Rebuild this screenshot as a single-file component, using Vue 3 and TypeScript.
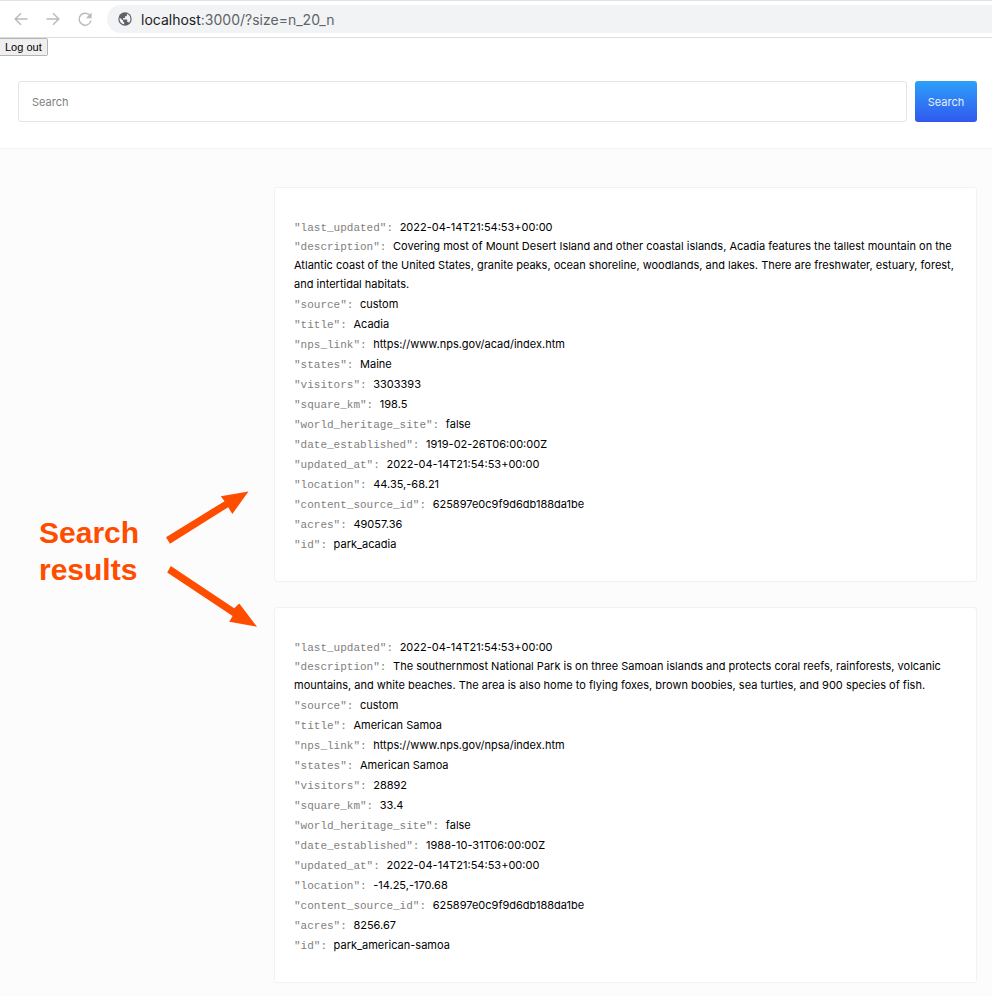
<script setup lang="ts">
import { ref } from 'vue'

interface Field {
  key: string
  value: string
}

const query = ref('')

const parks: Field[][] = [
  [
    { key: 'last_updated', value: '2022-04-14T21:54:53+00:00' },
    {
      key: 'description',
      value:
        'Covering most of Mount Desert Island and other coastal islands, Acadia features the tallest mountain on the Atlantic coast of the United States, granite peaks, ocean shoreline, woodlands, and lakes. There are freshwater, estuary, forest, and intertidal habitats.',
    },
    { key: 'source', value: 'custom' },
    { key: 'title', value: 'Acadia' },
    { key: 'nps_link', value: 'https://www.nps.gov/acad/index.htm' },
    { key: 'states', value: 'Maine' },
    { key: 'visitors', value: '3303393' },
    { key: 'square_km', value: '198.5' },
    { key: 'world_heritage_site', value: 'false' },
    { key: 'date_established', value: '1919-02-26T06:00:00Z' },
    { key: 'updated_at', value: '2022-04-14T21:54:53+00:00' },
    { key: 'location', value: '44.35,-68.21' },
    { key: 'content_source_id', value: '625897e0c9f9d6db188da1be' },
    { key: 'acres', value: '49057.36' },
    { key: 'id', value: 'park_acadia' },
  ],
  [
    { key: 'last_updated', value: '2022-04-14T21:54:53+00:00' },
    {
      key: 'description',
      value:
        'The southernmost National Park is on three Samoan islands and protects coral reefs, rainforests, volcanic mountains, and white beaches. The area is also home to flying foxes, brown boobies, sea turtles, and 900 species of fish.',
    },
    { key: 'source', value: 'custom' },
    { key: 'title', value: 'American Samoa' },
    { key: 'nps_link', value: 'https://www.nps.gov/npsa/index.htm' },
    { key: 'states', value: 'American Samoa' },
    { key: 'visitors', value: '28892' },
    { key: 'square_km', value: '33.4' },
    { key: 'world_heritage_site', value: 'false' },
    { key: 'date_established', value: '1988-10-31T06:00:00Z' },
    { key: 'updated_at', value: '2022-04-14T21:54:53+00:00' },
    { key: 'location', value: '-14.25,-170.68' },
    { key: 'content_source_id', value: '625897e0c9f9d6db188da1be' },
    { key: 'acres', value: '8256.67' },
    { key: 'id', value: 'park_american-samoa' },
  ],
]
</script>

<template>
  <div class="page">
    <div class="browser-bar">
      <button class="nav-button" type="button" aria-label="Back">
        <svg width="16" height="16" viewBox="0 0 16 16" fill="none" stroke="#b9bbbe" stroke-width="1.5">
          <path d="M14.5 8H2.5M8 2.2L2.2 8L8 13.8" />
        </svg>
      </button>
      <button class="nav-button" type="button" aria-label="Forward">
        <svg width="16" height="16" viewBox="0 0 16 16" fill="none" stroke="#b9bbbe" stroke-width="1.5">
          <path d="M1.5 8H13.5M8 2.2L13.8 8L8 13.8" />
        </svg>
      </button>
      <button class="nav-button" type="button" aria-label="Reload">
        <svg width="16" height="16" viewBox="0 0 16 16">
          <path d="M13 4.6A6 6 0 1 0 14 9.6" fill="none" stroke="#b9bbbe" stroke-width="1.5" />
          <path d="M14.6 1.4V7.2H8.8Z" fill="#b9bbbe" />
        </svg>
      </button>
      <div class="address">
        <svg width="14" height="14" viewBox="0 0 14 14">
          <circle cx="7" cy="7" r="6.7" fill="#5f6368" />
          <path
            d="M1.7 5.7L5.1 8.6V9.5Q5.1 10.1 6.2 10.3V12.3C3.5 12 1.6 9.8 1.5 7.2ZM8.9 1.8C11 2.5 12.5 4.7 12.5 7C12.5 8.4 12 9.7 11 10.8Q10.6 9.9 9.9 9.9H9.2V8Q9.2 7.4 8.6 7.4H5.1V6.1H6.4Q7 6.1 7 5.4V4.2H8.1Q8.9 4.2 8.9 3.2Z"
            fill="#f1f3f4"
          />
        </svg>
        <span class="url"><span class="host">localhost</span>:3000/?size=n_20_n</span>
      </div>
    </div>

    <header class="top">
      <button class="logout" type="button">Log out</button>
      <form class="search" @submit.prevent>
        <input v-model="query" class="search-input" type="text" placeholder="Search" aria-label="Search" />
        <button class="search-button" type="submit">Search</button>
      </form>
    </header>

    <div class="body">
      <aside class="note">
        <p class="note-text">Search results</p>
        <svg class="arrows" width="92" height="140" viewBox="0 0 92 140" fill="#ff4d00">
          <path d="M82.500 1.500L66.300 24L62.200 17.200L4 53.800L0 47.300L58.500 11.200L54.800 6.200Z" />
          <path d="M4.800 76L68.200 118.200L73.300 113.500L91 136.800L63.200 131.800L66.600 126L1.200 82.500Z" />
        </svg>
      </aside>
      <main class="results">
        <article v-for="(park, i) in parks" :key="i" class="card">
          <ul class="fields">
            <li v-for="field in park" :key="field.key" :class="['field', { prose: field.key === 'description' }]">
              <span class="key">"{{ field.key }}":&nbsp;</span><span class="value">{{ field.value }}</span>
            </li>
          </ul>
        </article>
      </main>
    </div>
  </div>
</template>

<style>
body {
  margin: 0;
  background: #fcfcfc;
}
</style>

<style scoped>
.page {
  font-family: Inter, 'Liberation Sans', sans-serif;
  color: #000;
}

.page * {
  box-sizing: border-box;
}

.browser-bar {
  display: flex;
  align-items: center;
  gap: 16px;
  height: 38px;
  padding-left: 13px;
  background: #fff;
  border-top: 1px solid #dfe3e8;
  border-bottom: 1px solid #dcdddf;
}

.nav-button {
  display: flex;
  padding: 0;
  border: 0;
  background: none;
}

.address {
  display: flex;
  flex: 1;
  align-items: center;
  gap: 9px;
  height: 28px;
  margin-left: -2px;
  padding-left: 11px;
  border-radius: 14px 0 0 14px;
  background: #f1f3f4;
}

.url {
  font-size: 14px;
  color: #5f6368;
}

.host {
  color: #202124;
}

.top {
  background: #fff;
  border-bottom: 1px solid #f3f3f3;
}

.logout {
  display: block;
  height: 18px;
  padding: 0 5px;
  border: 1px solid #b5b5b5;
  border-left-width: 0;
  border-radius: 0 2px 2px 0;
  background: #efefef;
  font-family: 'Liberation Sans', sans-serif;
  font-size: 11px;
  line-height: 16px;
  color: #000;
}

.search {
  display: flex;
  gap: 8px;
  padding: 25px 15px 26px 18px;
}

.search-input {
  flex: 1;
  min-width: 0;
  height: 41px;
  padding: 0 13px;
  border: 1px solid #e4e4e4;
  border-radius: 3px;
  background: #fff;
  font-family: inherit;
  font-size: 11px;
  color: #333;
}

.search-input::placeholder {
  color: #808080;
}

.search-button {
  min-width: 62px;
  height: 41px;
  padding: 0 12px;
  border: 0;
  border-radius: 3px;
  background: linear-gradient(#2da0fa, #3158ee);
  font-family: inherit;
  font-size: 11px;
  color: #e8f0ff;
}

.body {
  display: grid;
  grid-template-columns: 274px minmax(0, 1fr);
  padding: 38px 15px 13px 0;
}

.note {
  display: flex;
  align-items: flex-start;
  gap: 27px;
  padding: 303px 0 0 39px;
}

.note-text {
  width: 100px;
  margin: 24px 0 0;
  font-family: 'Liberation Sans', sans-serif;
  font-size: 30px;
  font-weight: 700;
  line-height: 37px;
  color: #ff4d00;
}

.arrows {
  flex: none;
}

.results {
  display: flex;
  flex-direction: column;
  gap: 25px;
}

.card {
  padding: 29px 19px 27px;
  border: 1px solid #f2f2f2;
  border-radius: 3px;
  background: #fff;
}

.fields {
  margin: 0;
  padding: 0;
  list-style: none;
}

.field {
  font-size: 11px;
  line-height: 20px;
}

.prose {
  line-height: 19px;
}

.key {
  font-family: 'Liberation Mono', monospace;
  line-height: 14px;
  color: #808080;
}
</style>
